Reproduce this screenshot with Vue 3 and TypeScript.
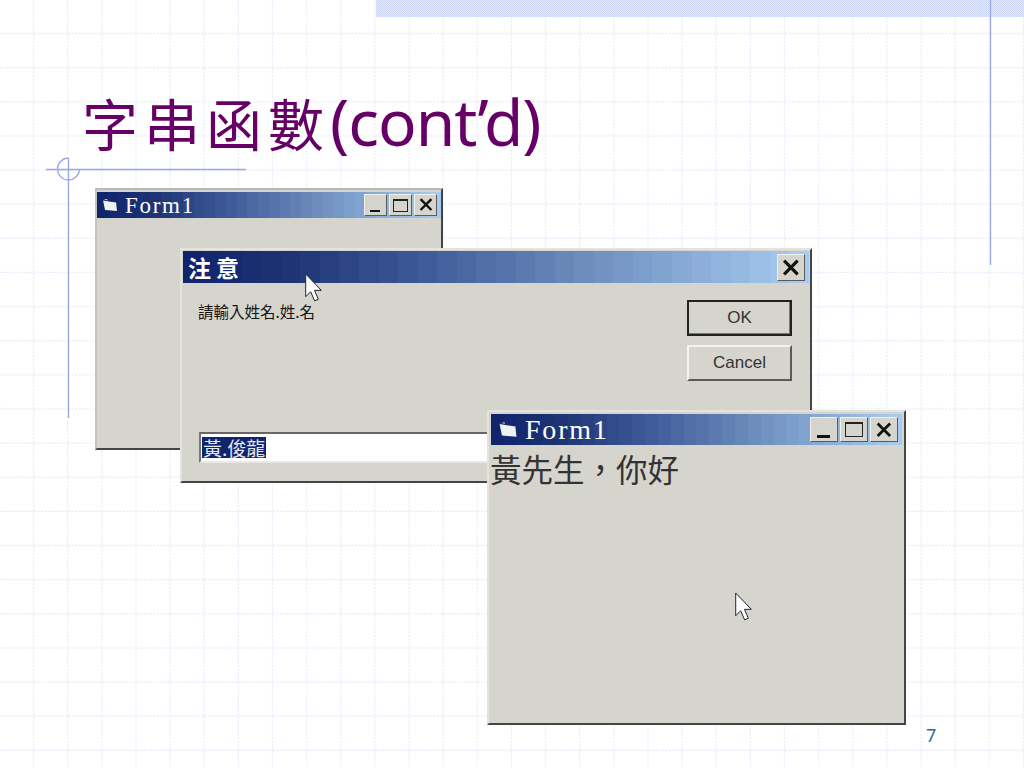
<script setup lang="ts">
const cjk = '"Noto Sans CJK TC", "Noto Sans CJK SC", sans-serif';

// title bars are banded like a 16-bit capture, not a smooth gradient
const stops: [number, number[]][] = [
  [0, [16, 37, 108]],
  [0.16, [30, 52, 116]],
  [0.38, [63, 90, 152]],
  [0.66, [111, 144, 192]],
  [1, [166, 202, 240]],
];

function colorAt(t: number): string {
  let i = 0;
  while (i < stops.length - 2 && t > stops[i + 1][0]) i++;
  const [t0, c0] = stops[i];
  const [t1, c1] = stops[i + 1];
  const k = (t - t0) / (t1 - t0);
  const rgb = c0.map((v, n) => Math.round(v + (c1[n] - v) * k));
  return `rgb(${rgb.join(",")})`;
}

const bandCount = 32;
const bands = Array.from({ length: bandCount }, (_, i) => {
  const from = (i / bandCount) * 100;
  const to = ((i + 1) / bandCount) * 100;
  return `${colorAt(i / (bandCount - 1))} ${from}% ${to}%`;
}).join(",");

const slideVars = {
  "--cjk": cjk,
  "--bar": `linear-gradient(90deg, ${bands})`,
};
</script>

<template>
  <div class="slide" :style="slideVars">
    <svg class="grid" width="1024" height="768" aria-hidden="true">
      <defs>
        <pattern id="cell" width="34.133" height="34.133" patternUnits="userSpaceOnUse">
          <path d="M33.6 0V34.133M0 33.6H34.133" stroke="#e6e9f9" stroke-width="1.2" stroke-dasharray="2 1.4" fill="none" />
        </pattern>
        <pattern id="dither" width="2" height="2" patternUnits="userSpaceOnUse">
          <rect width="2" height="2" fill="#e0e6fa" />
          <rect width="1" height="1" fill="#cfd8f6" />
          <rect x="1" y="1" width="1" height="1" fill="#cfd8f6" />
        </pattern>
      </defs>
      <rect width="1024" height="768" fill="url(#cell)" />
      <rect x="376" width="648" height="17" fill="url(#dither)" />
      <g stroke="#9aa8e4" stroke-width="1.3" fill="none">
        <path d="M990.5 0V265" />
        <path d="M46 169.5H246" />
        <path d="M68.5 158V418" />
        <path d="M68.5 158A11 11 0 1 0 79.5 169.5" />
      </g>
    </svg>

    <h1 class="title"><span class="title-cjk">字串函數</span><span class="title-latin">(cont’d)</span></h1>

    <section class="win win-back">
      <header class="bar">
        <svg class="doc" viewBox="0 0 16 14"><path d="M1 2L5 1L6 3L14 4L15 13L3 12Z" fill="#eef2f0" /><path d="M1 2L14 4" stroke="#16286b" /></svg>
        <span class="caption">Form1</span>
        <div class="ctrls">
          <span class="ctrl"><i class="min"></i></span>
          <span class="ctrl"><i class="max"></i></span>
          <span class="ctrl"><svg viewBox="0 0 14 14"><path d="M2 2L12 12M12 2L2 12" stroke="#111" stroke-width="2.2" /></svg></span>
        </div>
      </header>
    </section>

    <section class="win win-dialog">
      <header class="bar">
        <span class="caption caption-cjk">注意</span>
        <div class="ctrls">
          <span class="ctrl"><svg viewBox="0 0 14 14"><path d="M2 2L12 12M12 2L2 12" stroke="#111" stroke-width="2.4" /></svg></span>
        </div>
      </header>
      <div class="dialog-body">
        <p class="prompt">請輸入姓名.姓.名</p>
        <div class="actions">
          <button class="btn btn-default">OK</button>
          <button class="btn">Cancel</button>
        </div>
        <div class="field"><span class="selected">黃.俊龍</span></div>
      </div>
    </section>

    <section class="win win-front">
      <header class="bar">
        <svg class="doc" viewBox="0 0 16 14"><path d="M1 2L5 1L6 3L14 4L15 13L3 12Z" fill="#eef2f0" /><path d="M1 2L14 4" stroke="#16286b" /></svg>
        <span class="caption">Form1</span>
        <div class="ctrls">
          <span class="ctrl"><i class="min"></i></span>
          <span class="ctrl"><i class="max"></i></span>
          <span class="ctrl"><svg viewBox="0 0 14 14"><path d="M2 2L12 12M12 2L2 12" stroke="#111" stroke-width="2.2" /></svg></span>
        </div>
      </header>
      <p class="greeting">黃先生，你好</p>
    </section>

    <svg class="cursor cursor-a" viewBox="0 0 12 20"><path d="M.5.5V16.5L4 13L6.8 19.4L9.4 18.3L6.7 12H11.5Z" fill="#fff" stroke="#222" stroke-width=".7" /></svg>
    <svg class="cursor cursor-b" viewBox="0 0 12 20"><path d="M.5.5V16.5L4 13L6.8 19.4L9.4 18.3L6.7 12H11.5Z" fill="#fff" stroke="#222" stroke-width=".7" /></svg>

    <span class="page-no">7</span>
  </div>
</template>

<style scoped>
.slide {
  position: relative;
  width: 1024px;
  height: 768px;
  overflow: hidden;
  background: #fff;
}

.grid {
  position: absolute;
  inset: 0;
}

.title {
  position: relative;
  margin: 0;
  padding: 79px 0 0 82px;
  color: #660066;
  font-weight: 400;
  line-height: 86px;
  white-space: nowrap;
}

.title-cjk {
  font-family: var(--cjk);
  font-size: 56px;
  letter-spacing: 6px;
}

.title-latin {
  font-family: "Noto Sans", sans-serif;
  font-size: 64px;
  letter-spacing: -1px;
}

/* ── Windows ── */
.win {
  position: absolute;
  box-sizing: border-box;
  display: flex;
  flex-direction: column;
  background: #d5d4cd;
  border: 2px solid;
  border-color: #e4e3de #454545 #454545 #e4e3de;
  padding: 2px;
}

.win-back {
  left: 95px;
  top: 188px;
  width: 348px;
  height: 262px;
  padding: 2px 0;
  border-color: #b4bab8 #454545 #454545 #c4c4bc;
}

.win-dialog {
  left: 180px;
  top: 248px;
  width: 632px;
  height: 235px;
  padding: 1px;
}

.win-front {
  left: 487px;
  top: 410px;
  width: 419px;
  height: 315px;
}

.bar {
  display: flex;
  align-items: center;
  flex-shrink: 0;
  height: 26px;
  background: var(--bar);
  color: #fff;
}

.win-dialog .bar {
  height: 32px;
}

.win-front .bar {
  height: 31px;
}

.doc {
  width: 16px;
  height: 14px;
  margin-left: 5px;
  flex-shrink: 0;
}

.win-front .doc {
  margin-left: 7px;
  width: 20px;
  height: 17px;
}

.caption {
  margin-left: 7px;
  font-family: "Liberation Serif", serif;
  font-size: 23px;
  letter-spacing: 1.7px;
  line-height: 1;
}

.win-front .caption {
  margin-left: 7px;
  font-size: 28px;
  letter-spacing: 1.8px;
}

.caption-cjk {
  font-family: var(--cjk);
  font-size: 23px;
  font-weight: 700;
  letter-spacing: 5px;
  margin-left: 5px;
}

.ctrls {
  display: flex;
  gap: 2px;
  margin-left: auto;
  margin-right: 4px;
}

.ctrl {
  box-sizing: border-box;
  position: relative;
  display: flex;
  align-items: center;
  justify-content: center;
  width: 23px;
  height: 22px;
  background: #d5d4cd;
  border: 1px solid;
  border-color: #f2f1ec #5c5c5c #5c5c5c #f2f1ec;
}

.win-dialog .ctrl {
  width: 28px;
  height: 27px;
}

.win-front .ctrl {
  width: 28px;
  height: 25px;
}

.ctrl svg {
  width: 76%;
  height: 76%;
}

.min {
  position: absolute;
  left: 5px;
  bottom: 3px;
  width: 10px;
  height: 2px;
  background: #111;
}

.max {
  box-sizing: border-box;
  width: 15px;
  height: 13px;
  border: 1px solid #222;
  border-top-width: 2px;
}

.win-front .min {
  width: 13px;
  height: 3px;
  left: 6px;
}

.win-front .max {
  width: 18px;
  height: 15px;
}

/* ── Dialog ── */
.dialog-body {
  flex: 1;
  display: grid;
  grid-template-columns: 1fr 105px;
  grid-template-rows: auto 1fr;
  padding: 17px 17px 17px 15px;
}

.prompt {
  margin: 1px 0 0;
  font-family: var(--cjk);
  font-size: 15.5px;
  line-height: 20px;
  color: #151515;
}

.actions {
  display: flex;
  flex-direction: column;
  gap: 9px;
}

.btn {
  box-sizing: border-box;
  width: 105px;
  height: 36px;
  padding: 0;
  background: #d5d4cd;
  border: 2px solid;
  border-color: #f4f3ef #5a5a5a #5a5a5a #f4f3ef;
  font-family: "Liberation Sans", sans-serif;
  font-size: 17px;
  color: #333;
}

.btn-default {
  border-color: #222;
  box-shadow: inset -1px -1px 0 #777;
}

.field {
  grid-column: 1 / -1;
  align-self: end;
  box-sizing: border-box;
  display: flex;
  align-items: center;
  height: 31px;
  margin-left: 1px;
  padding-left: 1px;
  background: #fff;
  border: 2px solid;
  border-color: #666 #e8e8e4 #e8e8e4 #777;
}

.selected {
  padding: 0 1px;
  background: #10256c;
  color: #e4e8f2;
  font-family: var(--cjk);
  font-size: 19px;
  line-height: 21px;
}

/* ── Front window ── */
.greeting {
  margin: 5px 0 0 -1px;
  font-family: var(--cjk);
  font-size: 31.5px;
  line-height: 36px;
  color: #333;
}

/* ── Bits on top ── */
.cursor {
  position: absolute;
  width: 17px;
  height: 29px;
}

.cursor-a {
  left: 305px;
  top: 273px;
}

.cursor-b {
  left: 735px;
  top: 592px;
}

.page-no {
  position: absolute;
  left: 926px;
  top: 723px;
  font-family: "Noto Sans", sans-serif;
  font-size: 18px;
  color: #2a6a9a;
}
</style>
